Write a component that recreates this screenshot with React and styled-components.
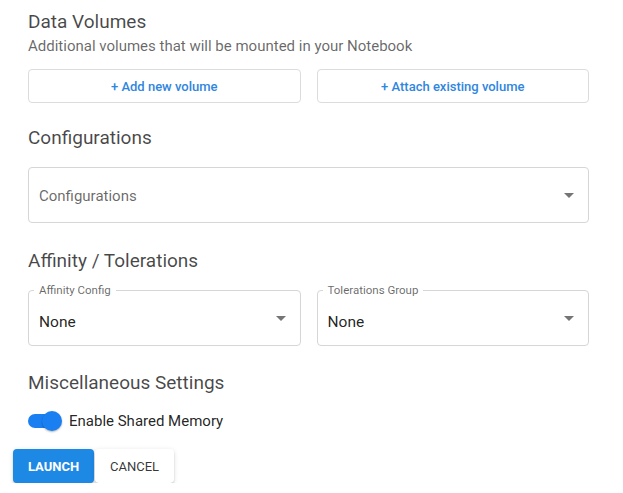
import styled, { createGlobalStyle } from 'styled-components';

const GlobalStyle = createGlobalStyle`
  body {
    margin: 0;
    background: #fff;
    font-family: Roboto, 'Noto Sans', sans-serif;
  }
`;

const Arrow = () => (
  <svg width='10' height='5' viewBox='0 0 10 5'>
    <path d='M0 0 L10 0 L5 5 Z' fill='#757575' />
  </svg>
);

const App = () => {
  return (
    <Page>
      <GlobalStyle />
      <Form>
        <Heading>Data Volumes</Heading>
        <SubText>Additional volumes that will be mounted in your Notebook</SubText>
        <Row>
          <OutlineButton>+ Add new volume</OutlineButton>
          <OutlineButton>+ Attach existing volume</OutlineButton>
        </Row>

        <Heading $top={23}>Configurations</Heading>
        <Select $top={17}>
          <Placeholder>Configurations</Placeholder>
          <Arrow />
        </Select>

        <Heading $top={26}>Affinity / Tolerations</Heading>
        <Row $top={17}>
          <Select>
            <FloatLabel>Affinity Config</FloatLabel>
            <Value>None</Value>
            <Arrow />
          </Select>
          <Select>
            <FloatLabel>Tolerations Group</FloatLabel>
            <Value>None</Value>
            <Arrow />
          </Select>
        </Row>

        <Heading $top={25}>Miscellaneous Settings</Heading>
        <ToggleRow>
          <Toggle>
            <Track />
            <Thumb />
          </Toggle>
          <ToggleLabel>Enable Shared Memory</ToggleLabel>
        </ToggleRow>
      </Form>
      <Actions>
        <Launch>Launch</Launch>
        <Cancel>Cancel</Cancel>
      </Actions>
    </Page>
  );
};

const Page = styled.div`
  padding: 10px 13px 0;
  width: 623px;
  box-sizing: border-box;
`;

const Form = styled.div`
  padding: 0 21px 0 15px;
  display: flex;
  flex-direction: column;
`;

const Heading = styled.h2`
  margin: ${(p) => p.$top || 0}px 0 0;
  font-size: 19px;
  font-weight: 400;
  line-height: 24px;
  color: rgba(0, 0, 0, 0.72);
`;

const SubText = styled.p`
  margin: 2px 0 0;
  font-size: 15px;
  line-height: 20px;
  color: rgba(0, 0, 0, 0.6);
`;

const Row = styled.div`
  margin-top: ${(p) => p.$top || 13}px;
  display: grid;
  grid-template-columns: 1fr 1fr;
  gap: 16px;
`;

const OutlineButton = styled.button`
  height: 34px;
  border: 1px solid #dcdcdc;
  border-radius: 4px;
  background: #fff;
  color: #2f86e0;
  font-family: Roboto, sans-serif;
  font-size: 13px;
  font-weight: 500;
  cursor: pointer;
`;

const Select = styled.div`
  position: relative;
  margin-top: ${(p) => p.$top || 0}px;
  height: 56px;
  box-sizing: border-box;
  border: 1px solid #d6d6d6;
  border-radius: 4px;
  padding: 0 14px 0 10px;
  display: flex;
  align-items: center;
  justify-content: space-between;
`;

const Placeholder = styled.span`
  font-size: 15px;
  color: rgba(0, 0, 0, 0.6);
  margin-top: 2px;
`;

const Value = styled.span`
  font-size: 15.5px;
  color: rgba(0, 0, 0, 0.87);
  margin-top: 7px;
`;

const FloatLabel = styled.span`
  position: absolute;
  top: -6px;
  left: 5px;
  padding: 0 5px;
  background: #fff;
  font-size: 11.5px;
  line-height: 11px;
  color: rgba(0, 0, 0, 0.6);
`;

const ToggleRow = styled.div`
  margin-top: 16px;
  display: flex;
  align-items: center;
  gap: 7px;
`;

const Toggle = styled.div`
  position: relative;
  width: 34px;
  height: 20px;
  display: flex;
  align-items: center;
`;

const Track = styled.div`
  width: 30px;
  height: 14px;
  border-radius: 7px;
  background: #1a80f2;
`;

const Thumb = styled.div`
  position: absolute;
  right: 0;
  top: 0;
  width: 20px;
  height: 20px;
  border-radius: 50%;
  background: #1a80f2;
  box-shadow: 0 1px 2px rgba(0, 0, 0, 0.3);
`;

const ToggleLabel = styled.span`
  font-size: 15px;
  color: rgba(0, 0, 0, 0.87);
`;

const Actions = styled.div`
  margin-top: 18px;
  display: flex;
`;

const BaseButton = styled.button`
  height: 34px;
  border: none;
  border-radius: 4px;
  font-family: Roboto, sans-serif;
  font-size: 13px;
  text-transform: uppercase;
  cursor: pointer;
  box-shadow: 0 3px 1px -2px rgba(0, 0, 0, 0.2), 0 2px 2px 0 rgba(0, 0, 0, 0.14),
    0 1px 5px 0 rgba(0, 0, 0, 0.12);
`;

const Launch = styled(BaseButton)`
  width: 81px;
  background: #1e88e5;
  color: #fff;
  font-weight: 700;
`;

const Cancel = styled(BaseButton)`
  width: 79px;
  margin-left: 1px;
  background: #fff;
  color: rgba(0, 0, 0, 0.8);
  font-weight: 400;
`;

export default App;
